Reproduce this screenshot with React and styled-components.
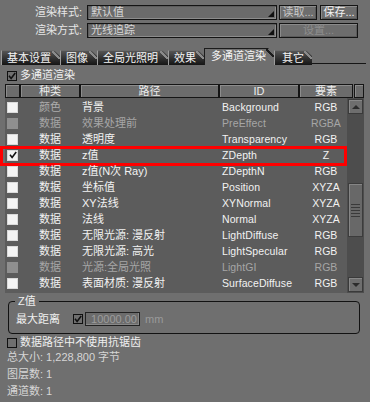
import React from 'react';
import styled, { createGlobalStyle } from 'styled-components';

const Global = createGlobalStyle`
  html, body { margin: 0; padding: 0; background: #6f6f6f; }
  body {
    font-family: "Liberation Sans", "Noto Sans CJK SC", sans-serif;
    font-size: 11px;
    color: #ececec;
  }
`;

const Page = styled.div`
  width: 370px;
  height: 402px;
  overflow: hidden;
  background: #6f6f6f;
  display: flex;
  flex-direction: column;
`;

/* ---------- top form ---------- */
const TopForm = styled.div`
  display: flex;
  flex-direction: column;
  gap: 3px;
  padding-top: 5px;
`;

const FormRow = styled.div`
  display: flex;
  align-items: stretch;
  height: 15px;
`;

const FormLabel = styled.div`
  width: 82px;
  text-align: right;
  line-height: 15px;
  color: #e6e6e6;
  white-space: nowrap;
`;

const Select = styled.div`
  width: ${p => p.$w}px;
  margin-left: 5px;
  box-sizing: border-box;
  border: 1px solid #141414;
  box-shadow: inset 1px 1px 0 #5c5c5c, inset -1px -1px 0 #8c8c8c;
  background: #6b6b6b;
  display: flex;
  align-items: flex-end;
`;

const SelectText = styled.span`
  flex: 1;
  align-self: center;
  padding-left: 3px;
  line-height: 13px;
  color: #d6d6d6;
`;

const Arrow = styled.span`
  width: 0;
  height: 0;
  border-left: 6px solid transparent;
  border-bottom: 6px solid #111;
  margin: 0 2px 2px 0;
`;

const Btn = styled.div`
  width: ${p => p.$w}px;
  margin-left: ${p => p.$ml}px;
  box-sizing: border-box;
  border: 1px solid #141414;
  box-shadow: inset 1px 1px 0 #8a8a8a, inset -1px -1px 0 #5a5a5a;
  background: #6d6d6d;
  text-align: center;
  line-height: 13px;
  color: ${p => p.$tone};
  white-space: nowrap;
`;

/* ---------- tabs ---------- */
const TabsBar = styled.div`
  margin-top: 10px;
  height: 17px;
  display: flex;
  align-items: flex-end;
  padding-left: 1px;
  padding-right: 4px;
`;

const Tab = styled.div`
  width: ${p => p.$w}px;
  height: ${p => (p.$active ? 17 : 15)}px;
  box-sizing: border-box;
  padding-left: ${p => p.$pl}px;
  line-height: 14px;
  color: #f4f4f4;
  white-space: nowrap;
  flex: none;
  clip-path: polygon(0 0, calc(100% - 6px) 0, 100% 6px, 100% 100%, 0 100%);
  border-left: 1px solid ${p => (p.$active ? '#1c1c1c' : '#9c9c9c')};
  border-top: 1px solid ${p => (p.$active ? '#1c1c1c' : '#6a6a6a')};
  background:
    linear-gradient(to bottom left, transparent 42%, ${p => (p.$active ? '#1c1c1c' : '#8a8a8a')} 42%, ${p => (p.$active ? '#1c1c1c' : '#8a8a8a')} 58%, transparent 58%) top right / 8px 8px no-repeat,
    ${p => (p.$active ? '#6f6f6f' : 'linear-gradient(#555555, #303030 55%, #151515)')};
`;

const TabFiller = styled.div`
  flex: 1;
  height: 17px;
  box-sizing: border-box;
  border-bottom: 1px solid #151515;
  margin-bottom: 1px;
`;

/* ---------- checkbox ---------- */
const Box = styled.span`
  width: ${p => p.$size}px;
  height: ${p => p.$size}px;
  box-sizing: border-box;
  flex: none;
  display: inline-flex;
  align-items: center;
  justify-content: center;
  background: ${p => p.$fill};
  border: 1px solid ${p => p.$line};
`;

const variants = {
  white: { fill: '#f4f4f4', line: '#dadada', size: 11 },
  gray: { fill: '#8f8f8f', line: '#8f8f8f', size: 11 },
  frame: { fill: '#6f6f6f', line: '#101010', size: 10 },
};

const Check = ({ variant = 'white', checked }) => {
  const v = variants[variant];
  return (
    <Box $fill={v.fill} $line={v.line} $size={v.size}>
      {checked && (
        <svg width="8" height="8" viewBox="0 0 8 8">
          <path d="M1 3.8 L3.1 6.4 L7.2 0.9" fill="none" stroke="#111" strokeWidth="1.6" />
        </svg>
      )}
    </Box>
  );
};

const CheckRow = styled.div`
  display: flex;
  align-items: center;
  gap: 3px;
  height: ${p => p.$h}px;
  margin-top: ${p => p.$mt}px;
  padding-left: 7px;
  color: #f0f0f0;
  line-height: ${p => p.$h}px;
`;

/* ---------- table ---------- */
const Table = styled.div`
  margin: 3px 0 0 5px;
  width: 359px;
  display: flex;
  flex-direction: column;
`;

const HeaderRow = styled.div`
  display: flex;
  height: 14px;
`;

const HeadCell = styled.div`
  width: ${p => p.$w}px;
  margin-left: ${p => p.$ml || 0}px;
  box-sizing: border-box;
  border: 1px solid #151515;
  box-shadow: inset 1px 1px 0 #8c8c8c;
  background: #6c6c6c;
  text-align: center;
  line-height: 12px;
  color: #ececec;
  white-space: nowrap;
`;

const Body = styled.div`
  height: 195px;
  display: flex;
  background: #5c5c5c;
`;

const Rows = styled.div`
  flex: 1;
  padding-top: 1px;
  display: flex;
  flex-direction: column;
`;

const Row = styled.div`
  position: relative;
  height: 16px;
  display: grid;
  grid-template-columns: 15px 60px 139px 80px 48px;
  align-items: center;
  line-height: 16px;
  white-space: nowrap;
  color: ${p => (p.$dim ? '#a6a6a6' : '#f2f2f2')};
`;

const BoxCell = styled.div`
  display: flex;
  padding-left: 2px;
`;

const KindCell = styled.div`
  text-align: center;
  color: ${p => (p.$dim ? '#acacac' : 'inherit')};
`;

const PathCell = styled.div`
  padding-left: 2px;
`;

const IdCell = styled.div`
  padding-left: 3px;
  font-size: 10.5px;
  letter-spacing: 0.1px;
`;

const ElemCell = styled.div`
  text-align: center;
  padding-left: 6px;
  font-size: 10.5px;
`;

const Highlight = styled.div`
  position: absolute;
  left: -5px;
  right: 0;
  top: -1px;
  bottom: -3px;
  border: 3px solid #ff0000;
  pointer-events: none;
`;

const ScrollBar = styled.div`
  width: 17px;
  box-sizing: border-box;
  padding: 1px;
  background: #4d4d4d;
  display: flex;
  flex-direction: column;
`;

const ScrollBtn = styled.div`
  height: 15px;
  box-sizing: border-box;
  border: 1px solid #3a3a3a;
  box-shadow: inset 1px 1px 0 #888;
  background: #6e6e6e;
  display: flex;
  align-items: center;
  justify-content: center;
`;

const Tri = styled.span`
  width: 0;
  height: 0;
  border-left: 4px solid transparent;
  border-right: 4px solid transparent;
  ${p => (p.$down ? 'border-top: 4px solid #2c2c2c;' : 'border-bottom: 4px solid #2c2c2c;')}
`;

const Track = styled.div`
  flex: 1;
  display: flex;
  flex-direction: column;
`;

const Thumb = styled.div`
  height: 54px;
  box-sizing: border-box;
  border: 1px solid #3c3c3c;
  box-shadow: inset 1px 1px 0 #858585;
  background: #686868;
  display: flex;
  align-items: center;
  justify-content: center;
`;

const Grip = styled.div`
  width: 9px;
  height: 13px;
  background: repeating-linear-gradient(#3a3a3a 0 1px, transparent 1px 3px);
`;

/* ---------- group box ---------- */
const Group = styled.fieldset`
  margin: 2px 10px 0 8px;
  padding: 5px 6px 7px 6px;
  border: 1px solid #121212;
  border-radius: 4px;
  min-inline-size: 0;
`;

const Legend = styled.legend`
  padding: 0 3px;
  line-height: 12px;
  color: #f0f0f0;
`;

const FieldRow = styled.div`
  display: flex;
  align-items: center;
  height: 14px;
`;

const FieldLabel = styled.span`
  width: 57px;
  padding-left: 1px;
  color: #f0f0f0;
  line-height: 14px;
`;

const NumInput = styled.div`
  width: 55px;
  height: 14px;
  margin-left: 2px;
  box-sizing: border-box;
  border: 1px solid #222;
  box-shadow: inset -1px -1px 0 #888;
  background: #6c6c6c;
  text-align: right;
  padding-right: 2px;
  line-height: 12px;
  color: #9c9c9c;
`;

const Unit = styled.span`
  margin-left: 5px;
  color: #9a9a9a;
  line-height: 14px;
`;

const Info = styled.div`
  padding-left: 7px;
  line-height: 17px;
  height: 17px;
  color: #d6d6d6;
  white-space: nowrap;
`;

const tabs = [
  { label: '基本设置', w: 59, pl: 5 },
  { label: '图像', w: 37, pl: 5 },
  { label: '全局光照明', w: 71, pl: 5 },
  { label: '效果', w: 36, pl: 5 },
  { label: '多通道渲染', w: 70, pl: 6, active: true },
  { label: '其它', w: 38, pl: 7 },
];

const rows = [
  { kind: '颜色', kindDim: true, path: '背景', id: 'Background', el: 'RGB' },
  { kind: '数据', path: '效果处理前', id: 'PreEffect', el: 'RGBA', dim: true },
  { kind: '数据', path: '透明度', id: 'Transparency', el: 'RGB' },
  { kind: '数据', path: 'z值', id: 'ZDepth', el: 'Z', checked: true, mark: true },
  { kind: '数据', path: 'z值(N次 Ray)', id: 'ZDepthN', el: 'RGB' },
  { kind: '数据', path: '坐标值', id: 'Position', el: 'XYZA' },
  { kind: '数据', path: 'XY法线', id: 'XYNormal', el: 'XYZA' },
  { kind: '数据', path: '法线', id: 'Normal', el: 'XYZA' },
  { kind: '数据', path: '无限光源: 漫反射', id: 'LightDiffuse', el: 'RGB' },
  { kind: '数据', path: '无限光源: 高光', id: 'LightSpecular', el: 'RGB' },
  { kind: '数据', path: '光源:全局光照', id: 'LightGI', el: 'RGB', dim: true },
  { kind: '数据', path: '表面材质: 漫反射', id: 'SurfaceDiffuse', el: 'RGB' },
];

export default function App() {
  const thumbOffset = 69;
  return (
    <>
      <Global />
      <Page>
        <TopForm>
          <FormRow>
            <FormLabel>渲染样式:</FormLabel>
            <Select $w={190}>
              <SelectText>默认值</SelectText>
              <Arrow />
            </Select>
            <Btn $w={38} $ml={2} $tone="#c6c6c6">读取...</Btn>
            <Btn $w={38} $ml={3} $tone="#f2f2f2">保存...</Btn>
          </FormRow>
          <FormRow>
            <FormLabel>渲染方式:</FormLabel>
            <Select $w={190}>
              <SelectText>光线追踪</SelectText>
              <Arrow />
            </Select>
            <Btn $w={79} $ml={2} $tone="#8e8e8e">设置...</Btn>
          </FormRow>
        </TopForm>

        <TabsBar>
          {tabs.map(t => (
            <Tab key={t.label} $w={t.w} $pl={t.pl} $active={t.active}>
              {t.label}
            </Tab>
          ))}
          <TabFiller />
        </TabsBar>

        <CheckRow $h={11} $mt={5}>
          <Check variant="frame" checked />
          <span>多通道渲染</span>
        </CheckRow>

        <Table>
          <HeaderRow>
            <HeadCell $w={15} />
            <HeadCell $w={60}>种类</HeadCell>
            <HeadCell $w={139}>路径</HeadCell>
            <HeadCell $w={80}>ID</HeadCell>
            <HeadCell $w={54}>要素</HeadCell>
            <HeadCell $w={10} $ml={1} />
          </HeaderRow>
          <Body>
            <Rows>
              {rows.map(r => (
                <Row key={r.id} $dim={r.dim}>
                  <BoxCell>
                    <Check variant={r.dim ? 'gray' : 'white'} checked={r.checked} />
                  </BoxCell>
                  <KindCell $dim={r.kindDim}>{r.kind}</KindCell>
                  <PathCell>{r.path}</PathCell>
                  <IdCell>{r.id}</IdCell>
                  <ElemCell>{r.el}</ElemCell>
                  {r.mark && <Highlight />}
                </Row>
              ))}
            </Rows>
            <ScrollBar>
              <ScrollBtn><Tri /></ScrollBtn>
              <Track>
                <Thumb style={{ marginTop: thumbOffset }}>
                  <Grip />
                </Thumb>
              </Track>
              <ScrollBtn><Tri $down /></ScrollBtn>
            </ScrollBar>
          </Body>
        </Table>

        <Group>
          <Legend>Z值</Legend>
          <FieldRow>
            <FieldLabel>最大距离</FieldLabel>
            <Check variant="frame" checked />
            <NumInput>10000.00</NumInput>
            <Unit>mm</Unit>
          </FieldRow>
        </Group>

        <CheckRow $h={13} $mt={2}>
          <Check variant="frame" />
          <span>数据路径中不使用抗锯齿</span>
        </CheckRow>

        <Info>总大小: 1,228,800 字节</Info>
        <Info>图层数: 1</Info>
        <Info>通道数: 1</Info>
      </Page>
    </>
  );
}
